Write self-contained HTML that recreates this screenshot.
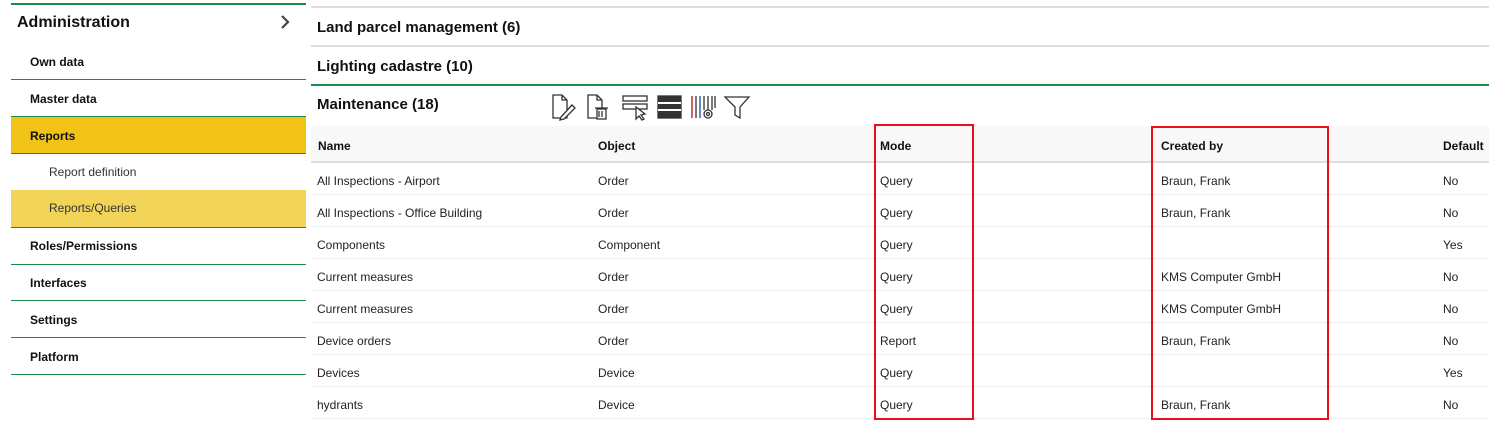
<!DOCTYPE html>
<html><head><meta charset="utf-8"><style>
*{margin:0;padding:0;box-sizing:border-box}
body{width:1489px;height:426px;background:#fff;font-family:"Liberation Sans",sans-serif;color:#111;position:relative;overflow:hidden}
.a{position:absolute}
.side{left:11px;top:3px;width:295px;border-top:2px solid #1e8a4a}
.t{position:absolute;white-space:nowrap}
.hr{position:absolute;height:1px}
.b{font-weight:bold}
</style></head><body>
<div class="a side"></div>
<div class="t b" style="left:17px;top:14px;font-size:16px">Administration</div>
<svg class="a" style="left:279px;top:14px" width="12" height="16"><path d="M3 2 L9 8 L3 14" stroke="#444" stroke-width="2.2" fill="none"/></svg>
<div class="a" style="left:11px;top:117px;width:295px;height:36px;background:#f1c316"></div>
<div class="a" style="left:11px;top:190px;width:295px;height:37px;background:#f2d458"></div>
<div class="hr" style="left:11px;width:295px;top:79px;background:#1e8a4a"></div>
<div class="hr" style="left:11px;width:295px;top:116px;background:#1e8a4a"></div>
<div class="hr" style="left:11px;width:295px;top:153px;background:#1e8a4a"></div>
<div class="hr" style="left:11px;width:295px;top:227px;background:#1e8a4a"></div>
<div class="hr" style="left:11px;width:295px;top:264px;background:#1e8a4a"></div>
<div class="hr" style="left:11px;width:295px;top:300px;background:#1e8a4a"></div>
<div class="hr" style="left:11px;width:295px;top:337px;background:#1e8a4a"></div>
<div class="hr" style="left:11px;width:295px;top:374px;background:#1e8a4a"></div>
<div class="t b" style="left:30px;top:55px;font-size:12px">Own data</div>
<div class="t b" style="left:30px;top:92px;font-size:12px">Master data</div>
<div class="t b" style="left:30px;top:129px;font-size:12px">Reports</div>
<div class="t" style="left:49px;top:165px;font-size:12px;color:#333">Report definition</div>
<div class="t" style="left:49px;top:201px;font-size:12px;color:#333">Reports/Queries</div>
<div class="t b" style="left:30px;top:239px;font-size:12px">Roles/Permissions</div>
<div class="t b" style="left:30px;top:276px;font-size:12px">Interfaces</div>
<div class="t b" style="left:30px;top:313px;font-size:12px">Settings</div>
<div class="t b" style="left:30px;top:350px;font-size:12px">Platform</div>

<div class="hr" style="left:311px;width:1178px;top:6px;height:2px;background:#ddd"></div>
<div class="t b" style="left:317px;top:19px;font-size:15px">Land parcel management (6)</div>
<div class="hr" style="left:311px;width:1178px;top:45px;height:2px;background:#ddd"></div>
<div class="t b" style="left:317px;top:58px;font-size:15px">Lighting cadastre (10)</div>
<div class="hr" style="left:311px;width:1178px;top:84px;height:2px;background:#1e8a4a"></div>
<div class="t b" style="left:317px;top:96px;font-size:15px">Maintenance (18)</div>

<svg class="a" style="left:550px;top:92px" width="205" height="30" fill="none" stroke="#333" stroke-width="1.3">
<path d="M3 3 H12 L17 8 V26 H3 Z M12 3 V8 H17"/><path d="M11 25 L22 13 L25 16 L14 27 L10 28 Z" fill="#fff"/>
<path d="M38 3 H47 L52 8 V26 H38 Z M47 3 V8 H52"/><rect x="47" y="17" width="9" height="10" fill="#fff"/><path d="M45 16 H58 M49 19 V25 M52 19 V25"/>
<rect x="73" y="4" width="24" height="5"/><rect x="73" y="12" width="24" height="5"/><path d="M86 15 L86 27 L89 24 L92 28 L94 27 L91 23 L95 22 Z" fill="#fff"/>
<rect x="108" y="4" width="23" height="22" fill="#333"/><path d="M108 11 H131 M108 18 H131" stroke="#fff" stroke-width="2"/>
<path d="M142 4 V26 M146 4 V26 M150 4 V26 M154 4 V18 M158 4 V18 M162 4 V18 M165 4 V16" stroke="#333"/><path d="M142 4 V26" stroke="#c33"/><path d="M150 4 V26" stroke="#36c"/><circle cx="158" cy="22" r="4"/><circle cx="158" cy="22" r="1.5"/>
<path d="M175 5 H199 L190 15 V26 L185 23 V15 Z"/>
</svg>

<div class="a" style="left:311px;top:126px;width:1178px;height:37px;background:#f8f8f8;border-bottom:2px solid #ddd"></div>
<div class="t b" style="left:318px;top:139px;font-size:12px">Name</div>
<div class="t b" style="left:598px;top:139px;font-size:12px">Object</div>
<div class="t b" style="left:880px;top:139px;font-size:12px">Mode</div>
<div class="t b" style="left:1161px;top:139px;font-size:12px">Created by</div>
<div class="t b" style="left:1443px;top:139px;font-size:12px">Default</div>

<div id="rows"></div>
<div class="a" style="left:874px;top:124px;width:100px;height:296px;border:2px solid #e8101a"></div>
<div class="a" style="left:1151px;top:126px;width:178px;height:294px;border:2px solid #e8101a"></div>
<script>
var d=[["All Inspections - Airport","Order","Query","Braun, Frank","No"],["All Inspections - Office Building","Order","Query","Braun, Frank","No"],["Components","Component","Query","","Yes"],["Current measures","Order","Query","KMS Computer GmbH","No"],["Current measures","Order","Query","KMS Computer GmbH","No"],["Device orders","Order","Report","Braun, Frank","No"],["Devices","Device","Query","","Yes"],["hydrants","Device","Query","Braun, Frank","No"]];
var x=[317,598,880,1161,1443],h="";
d.forEach(function(r,i){var y=174+i*32;r.forEach(function(c,j){h+='<div class="t" style="left:'+x[j]+'px;top:'+y+'px;font-size:12px;color:#222">'+c+'</div>'});
h+='<div class="hr" style="left:311px;width:1178px;top:'+(194+i*32)+'px;background:#eee"></div>'});
document.getElementById("rows").innerHTML=h;
</script>
</body></html>
